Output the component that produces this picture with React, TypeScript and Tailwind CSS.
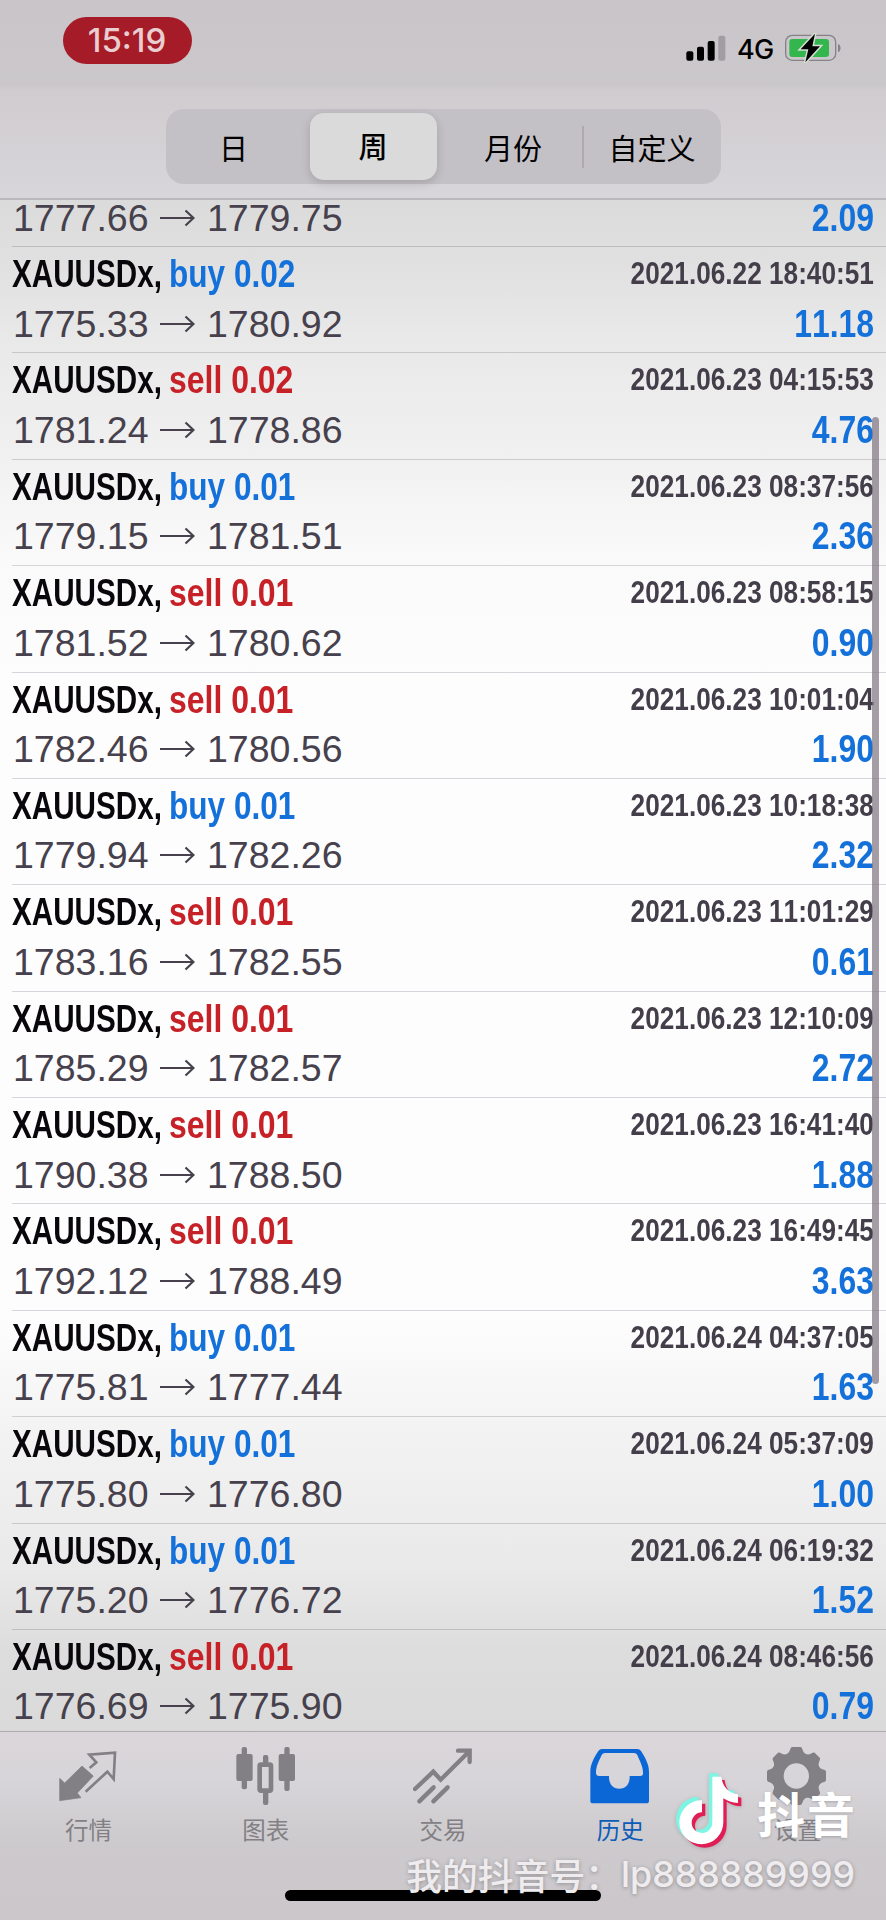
import type { ReactNode } from "react";

type Deal = {
  side?: "buy" | "sell";
  volume?: string;
  time?: string;
  open: string;
  close: string;
  profit: string;
};

const deals: Deal[] = [
  { side: "buy", volume: "0.02", time: "2021.06.22 18:40:51", open: "1775.33", close: "1780.92", profit: "11.18" },
  { side: "sell", volume: "0.02", time: "2021.06.23 04:15:53", open: "1781.24", close: "1778.86", profit: "4.76" },
  { side: "buy", volume: "0.01", time: "2021.06.23 08:37:56", open: "1779.15", close: "1781.51", profit: "2.36" },
  { side: "sell", volume: "0.01", time: "2021.06.23 08:58:15", open: "1781.52", close: "1780.62", profit: "0.90" },
  { side: "sell", volume: "0.01", time: "2021.06.23 10:01:04", open: "1782.46", close: "1780.56", profit: "1.90" },
  { side: "buy", volume: "0.01", time: "2021.06.23 10:18:38", open: "1779.94", close: "1782.26", profit: "2.32" },
  { side: "sell", volume: "0.01", time: "2021.06.23 11:01:29", open: "1783.16", close: "1782.55", profit: "0.61" },
  { side: "sell", volume: "0.01", time: "2021.06.23 12:10:09", open: "1785.29", close: "1782.57", profit: "2.72" },
  { side: "sell", volume: "0.01", time: "2021.06.23 16:41:40", open: "1790.38", close: "1788.50", profit: "1.88" },
  { side: "sell", volume: "0.01", time: "2021.06.23 16:49:45", open: "1792.12", close: "1788.49", profit: "3.63" },
  { side: "buy", volume: "0.01", time: "2021.06.24 04:37:05", open: "1775.81", close: "1777.44", profit: "1.63" },
  { side: "buy", volume: "0.01", time: "2021.06.24 05:37:09", open: "1775.80", close: "1776.80", profit: "1.00" },
  { side: "buy", volume: "0.01", time: "2021.06.24 06:19:32", open: "1775.20", close: "1776.72", profit: "1.52" },
  { side: "sell", volume: "0.01", time: "2021.06.24 08:46:56", open: "1776.69", close: "1775.90", profit: "0.79" },
];

const NOTE =
  "M157 50H184C187 79 206 99 234 103V129C216 129 202 123 190 115V186A66 66 0 1 1 126 121V157A31 31 0 1 0 157 186Z";

const StatusBar = () => (
  <div className="flex h-[109px] items-start justify-between pl-[63px] pr-[45px] pt-[17px]">
    <div className="flex h-[47px] w-[129px] items-center justify-center rounded-full bg-[#a51c28] pr-px font-['Inter'] text-[33px] font-medium leading-none text-[#e9cdcf]">
      15:19
    </div>
    <div className="flex items-center pt-[16px]">
      <svg width="40" height="26" viewBox="0 0 120 78" className="mr-[11px]">
        <rect x="1" y="49" width="21" height="28" rx="6" fill="#000" />
        <rect x="33" y="35" width="21" height="42" rx="6" fill="#000" />
        <rect x="65" y="18" width="21" height="59" rx="6" fill="#000" />
        <rect x="97" y="2" width="21" height="75" rx="6" fill="#a19da2" />
      </svg>
      <span className="w-[39px] pt-[3px] font-['Inter'] text-[27px] font-medium leading-none tracking-[-0.6px] text-black">4G</span>
      <svg width="56" height="30" viewBox="0 0 168 90" className="ml-[9px]">
        <rect x="2" y="7" width="150" height="75" rx="20" fill="none" stroke="#858387" strokeWidth="4" />
        <rect x="13" y="18" width="119" height="54" rx="9" fill="#34b64e" />
        <path d="M159 33c10 3 10 22 0 25z" fill="#858387" />
        <path d="M90 2 47 49h23L61 88l44-48H82z" fill="#000" stroke="#d5ded3" strokeWidth="9" paintOrder="stroke" />
      </svg>
    </div>
  </div>
);

const PeriodTabs = () => (
  <div className="mx-auto flex h-[75px] w-[555px] items-center rounded-[18px] bg-[#c4c1c6] font-['Noto_Sans_CJK_SC',sans-serif] text-[29px] text-black">
    <div className="w-[136px] text-center leading-[44px]">日</div>
    <div className="mx-[8px] h-[67px] w-[127px] rounded-[14px] bg-[#dadadb] text-center font-medium leading-[65px] shadow-[0_3px_10px_rgba(0,0,0,0.16)]">周</div>
    <div className="w-[137px] text-center leading-[44px]">月份</div>
    <div className="h-[42px] w-[2px] bg-[#aeaab0]" />
    <div className="flex-1 text-center leading-[44px]">自定义</div>
  </div>
);

const Arrow = () => (
  <svg width="36" height="18" viewBox="0 0 36 18" fill="none" stroke="#46414c" strokeWidth="2.2">
    <path d="M1 9h33M26.500 1.500 34.500 9l-8 7.500" />
  </svg>
);

const PriceLine = ({ deal }: { deal: Deal }) => (
  <div className="flex h-[48px] items-center justify-between text-[37.5px] leading-[48px] text-[#46414c]">
    <div className="flex items-center">
      <span className="w-[147px] pl-px">{deal.open}</span>
      <Arrow />
      <span className="ml-[12px]">{deal.close}</span>
    </div>
    <span className="origin-right scale-x-[0.84] text-[38px] font-bold text-[#1571da] [font-kerning:none]">{deal.profit}</span>
  </div>
);

const DealRow = ({ deal }: { deal: Deal }) => {
  const isBuy = deal.side === "buy";
  return (
    <div className="ml-[12px] h-[106.38px] shrink-0 border-t border-[#46324f]/20 pr-[12px]">
      <div className="flex h-[52.500px] items-start justify-between whitespace-nowrap font-bold">
        <div className="flex text-[38.5px] leading-[54px]">
          <span className="w-[157px] origin-left scale-x-[0.77] text-[#09070b]">XAUUSDx,</span>
          <span className={isBuy ? "origin-left scale-x-[0.82] text-[#1571da]" : "origin-left scale-x-[0.83] text-[#c72128]"}>
            {deal.side} {deal.volume}
          </span>
        </div>
        <span className="origin-right scale-x-[0.845] text-[31px] leading-[53px] text-[#433e49] [font-kerning:none]">{deal.time}</span>
      </div>
      <PriceLine deal={deal} />
    </div>
  );
};

const QuotesIcon = () => (
  <svg width="60" height="60" viewBox="0 0 180 180">
    <path d="M2 97 17 111 69 60 103 90 55 141 66 155 2 164z" fill="#828084" stroke="#828084" strokeWidth="2" strokeLinejoin="round" />
    <path d="M92 66 112 49 91 26 168 20 164 99 145 77 80 137" fill="none" stroke="#828084" strokeWidth="8" />
  </svg>
);

const ChartIcon = () => (
  <svg width="60" height="60" viewBox="0 0 180 180" fill="#828084">
    <rect x="1" y="24" width="49" height="81" rx="6" />
    <rect x="17" y="3" width="16" height="127" rx="6" />
    <rect x="81" y="27" width="16" height="26" rx="6" />
    <rect x="81" y="136" width="16" height="41" rx="6" />
    <rect x="71" y="56" width="34" height="78" rx="4" fill="none" stroke="#828084" strokeWidth="14" />
    <rect x="128" y="24" width="49" height="81" rx="6" />
    <rect x="145" y="3" width="16" height="132" rx="6" />
  </svg>
);

const TradeIcon = () => (
  <svg width="60" height="60" viewBox="0 0 180 180" fill="none" stroke="#828084" strokeWidth="13" strokeLinecap="round">
    <path d="M6 129 61 77 83 101 169 16M135 14h35v34" />
    <path d="M19 166 62 124M61 166l43-42" />
  </svg>
);

const HistoryIcon = () => (
  <svg width="60" height="60" viewBox="0 0 180 180">
    <path
      fillRule="evenodd"
      d="M36 9H142Q149 9 153 15C166 36 177 54 177 78V164Q177 172 169 172H9Q1 172 1 164V78C1 54 12 36 25 15Q29 9 36 9ZM45 21Q38 21 35 27C28 43 17 61 18 82Q19 90 27 90H57C56 112 67 128 88 128S120 112 119 90H151Q159 90 159 82C160 61 148 43 142 27Q139 21 132 21Z"
      fill="#0b67d5"
    />
  </svg>
);

const SettingsIcon = () => (
  <svg width="60" height="60" viewBox="0 0 180 180">
    <path
      fillRule="evenodd"
      d="M76 3H100C108 3 105 20 117 24C129 29 137 16 143 20L158 35C163 41 151 50 156 61C161 73 177 69 177 78V102C177 110 161 107 156 119C151 130 163 139 158 145L143 160C137 165 129 151 117 156C105 160 108 177 100 177H76C68 177 71 160 59 156C47 151 39 165 33 160L18 145C13 139 25 130 20 119C15 107 0 110 0 102V78C0 69 15 73 20 61C25 50 13 41 18 35L33 20C39 16 47 29 59 24C71 20 68 3 76 3ZM88 52A38 38 0 1 0 88 128A38 38 0 1 0 88 52Z"
      fill="#828084"
    />
  </svg>
);

const TabItem = ({ label, active, children }: { label: string; active?: boolean; children: ReactNode }) => (
  <div className={active ? "flex flex-1 flex-col items-center text-[#0d5cb8]" : "flex flex-1 flex-col items-center text-[#828084]"}>
    {children}
    <span className="mt-[6px] font-['Noto_Sans_CJK_SC',sans-serif] text-[23.5px] leading-[34px]">{label}</span>
  </div>
);

const Watermark = () => (
  <div className="absolute bottom-[26px] right-[31px] flex flex-col items-end font-['Noto_Sans_CJK_SC',sans-serif]">
    <div className="-mr-[2px] flex items-start">
      <svg width="70" height="80" viewBox="0 0 210 240" className="mr-[12px] drop-shadow-sm">
        <path d={NOTE} fill="#7cf5e4" transform="translate(-55 -40)" />
        <path d={NOTE} fill="#e01d55" transform="translate(-35 -20)" />
        <path d={NOTE} fill="#fff" transform="translate(-45 -30)" />
      </svg>
      <span className="mt-[14px] text-[48px] font-bold leading-[56px] tracking-[2px] text-white [text-shadow:0_1px_3px_rgba(0,0,0,0.2)]">抖音</span>
    </div>
    <div className="mt-[4px] flex items-center whitespace-nowrap text-[35.8px] font-medium leading-[40px] text-[#efecef] [text-shadow:0_1px_4px_rgba(0,0,0,0.3)]">
      <span>我的抖音号：</span>
      <span className="font-['Inter']">lp888889999</span>
    </div>
  </div>
);

const App = () => {
  return (
    <div className="relative flex h-[1920px] w-[886px] flex-col overflow-hidden font-['Liberation_Sans',Arial,sans-serif]">
      <header className="h-[200px] shrink-0 border-b-2 border-[#bbb8bd] bg-[linear-gradient(#c9c5c9_0%,#cbc8cb_43%,#d0cccf_46%,#d8d6db_100%)]">
        <StatusBar />
        <PeriodTabs />
      </header>

      <main className="h-[1531px] shrink-0 overflow-hidden bg-[linear-gradient(#dbdbdb_0px,#e0e0e0_60px,#e9e9e9_140px,#f0f0f0_250px,#fafafa_360px,#fdfdfe_480px,#fdfdfe_1120px,#f3f3f3_1230px,#e9e9e9_1370px,#dddddd_1450px,#dadada_1531px)]">
        <div className="flex flex-col">
          <div className="ml-[12px] flex h-[46px] shrink-0 items-start pr-[12px]">
            <div className="-mt-[6px] flex-1">
              <PriceLine deal={{ open: "1777.66", close: "1779.75", profit: "2.09" }} />
            </div>
          </div>
          {deals.map((deal) => (
            <DealRow key={deal.time} deal={deal} />
          ))}
        </div>
      </main>
      <div className="absolute left-[872px] top-[417px] h-[967px] w-[7px] rounded-full bg-[#7d747f]/70" />

      <footer className="flex h-[189px] shrink-0 flex-col justify-between border-t border-[#aeacb0] bg-[linear-gradient(#dbd6da,#d7d5d9_25%,#cdcacd_60%,#cbc6ca)] pt-[14px] pb-[19px]">
        <nav className="flex">
          <TabItem label="行情">
            <QuotesIcon />
          </TabItem>
          <TabItem label="图表">
            <ChartIcon />
          </TabItem>
          <TabItem label="交易">
            <TradeIcon />
          </TabItem>
          <TabItem label="历史" active>
            <HistoryIcon />
          </TabItem>
          <TabItem label="设置">
            <SettingsIcon />
          </TabItem>
        </nav>
        <div className="mx-auto h-[11px] w-[316px] rounded-full bg-black" />
      </footer>
      <Watermark />
    </div>
  );
};

export default App;
